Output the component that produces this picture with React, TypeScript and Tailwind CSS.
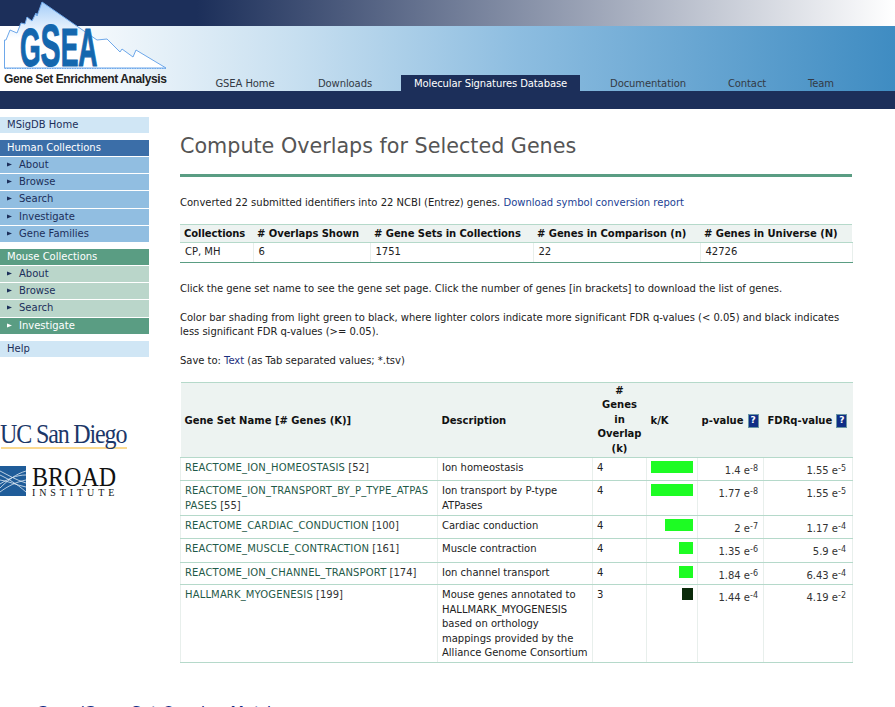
const F = "font-['DejaVu_Sans','Liberation_Sans',sans-serif]";

function Tri({ className }: { className: string }) {
  return (
    <svg width="5" height="5" viewBox="0 0 5 5" className={className}>
      <path d="M0 0.5L5 2.5L0 4.5Z" fill="currentColor" />
    </svg>
  );
}

function SideItem({ label, tone, tall }: { label: string; tone: "blue" | "green" | "active"; tall?: boolean }) {
  const bg = tone === "blue" ? "bg-[#91bee1] text-[#1c2f5a]" : tone === "green" ? "bg-[#bad6ca] text-[#1c2f5a]" : "bg-[#5a9d83] text-white";
  return (
    <div className={`mt-px flex items-center pl-[7px] text-[10px] ${tall ? "h-[17px] pb-[2px]" : "h-4 pb-px"} ${bg}`}>
      <Tri className="mr-[7px] shrink-0" />
      {label}
    </div>
  );
}

function SideHead({ label, className }: { label: string; className: string }) {
  return <div className={`flex h-4 items-center pb-px pl-[7px] ${className}`}>{label}</div>;
}

function Sidebar() {
  return (
    <div className="w-[149px] shrink-0 pt-2 text-[10px]">
      <SideHead label="MSigDB Home" className="bg-[#d0e6f5] text-[#1c2f5a]" />
      <SideHead label="Human Collections" className="mt-[7px] bg-[#3b6ea8] text-white" />
      <SideItem label="About" tone="blue" />
      <SideItem label="Browse" tone="blue" />
      <SideItem label="Search" tone="blue" tall />
      <SideItem label="Investigate" tone="blue" />
      <SideItem label="Gene Families" tone="blue" />
      <SideHead label="Mouse Collections" className="mt-[7px] bg-[#5a9d83] text-white" />
      <SideItem label="About" tone="green" />
      <SideItem label="Browse" tone="green" />
      <SideItem label="Search" tone="green" tall />
      <SideItem label="Investigate" tone="active" />
      <SideHead label="Help" className="mt-[7px] bg-[#d0e6f5] text-[#1c2f5a]" />

      <div className="mt-[65px] origin-left scale-x-[0.89] whitespace-nowrap font-['Liberation_Serif',serif] text-[27px] leading-[25px] tracking-[-1.3px] text-[#1c3768]">UC San Diego</div>
      <div className="ml-px h-[2px] w-[126px] bg-[#fbd98f]" />
      <div className="mt-[17px] flex h-[30px] items-start">
        <svg width="26" height="30" viewBox="0 0 26 30" className="shrink-0">
          <rect width="26" height="30" fill="#1f5c99" />
          <g stroke="#dfeaf4" strokeWidth="0.8" fill="none">
            <path d="M0 22C8 14 16 8 26 5" />
            <path d="M0 18C8 13 16 9 26 9" />
            <path d="M0 9C8 13 16 17 26 26" />
            <path d="M0 14C8 15 16 19 26 21" />
            <path d="M0 26C8 20 16 16 26 14" />
            <path d="M0 5C8 9 16 14 26 17" />
          </g>
        </svg>
        <div className="ml-[6px] font-['Liberation_Serif',serif] text-[#111]">
          <div className="origin-left scale-x-[0.89] whitespace-nowrap text-[27px] leading-[22px]">BROAD</div>
          <div className="whitespace-nowrap pt-px text-[10px] leading-[8px] tracking-[3.9px]">INSTITUTE</div>
        </div>
      </div>
    </div>
  );
}

function Tab({ label, className, active }: { label: string; className: string; active?: boolean }) {
  return (
    <div className={`flex h-4 items-center justify-center text-[10px] tracking-[-0.1px] ${className} ${active ? "bg-[#1c2f5a] text-white" : "text-[#333a45]"}`}>
      {label}
    </div>
  );
}

const LOGO = "M4.5 68L4.5 40L6 40L10 30L17 33L21 23L25 24L27 17L32 21L36 13L37 16L42 2L97 40L107 39L120 52L122 49L133 57L136 50L166 68Z";

function Header() {
  return (
    <div className="relative">
      <div className="h-[26px] bg-[linear-gradient(90deg,#1c2f5a_0%,#1c2f5a_22%,#fff_100%)]" />
      <div className="flex h-[65px] items-end bg-[linear-gradient(90deg,#fff_0%,#fff_5%,#c7dff0_33%,#8dbde0_58%,#3f8cc2_100%)] pl-[197px]">
        <Tab label="GSEA Home" className="w-[96px]" />
        <Tab label="Downloads" className="w-[108px] pr-[4px]" />
        <Tab label="Molecular Signatures Database" className="w-[179px]" active />
        <Tab label="Documentation" className="w-[136px]" />
        <Tab label="Contact" className="w-[62px]" />
        <Tab label="Team" className="w-[86px]" />
      </div>
      <div className="h-[18px] bg-[#1c2f5a]" />
      <svg width="170" height="72" viewBox="0 0 170 72" className="absolute left-0 top-0">
        <defs>
          <linearGradient id="logoFill" x1="0" y1="0" x2="0" y2="1">
            <stop offset="0" stopColor="#a4cdf8" />
            <stop offset="0.55" stopColor="#ffffff" />
            <stop offset="1" stopColor="#ffffff" />
          </linearGradient>
        </defs>
        <path d={LOGO} fill="url(#logoFill)" stroke="#6ea8ea" strokeWidth="1" />
        <path d="M4.5 68.5H166" stroke="#6ea8ea" strokeWidth="1" strokeDasharray="1.5 1" />
      </svg>
      <div className="absolute left-[20px] top-[21px] flex h-[50px] origin-left scale-x-[0.5] items-baseline whitespace-nowrap font-['Liberation_Sans',sans-serif] text-[53px] font-bold leading-[50px] text-[#1467ae] [-webkit-text-stroke:1.2px_#1467ae]">
        <span>G</span>
        <span className="text-[60px]">S</span>
        <span>E</span>
        <span>A</span>
      </div>
      <div className="absolute left-1 top-[72px] whitespace-nowrap font-['Liberation_Sans',sans-serif] text-[12px] font-bold leading-[15px] tracking-[-0.4px] text-[#222]">Gene Set Enrichment Analysis</div>
    </div>
  );
}

const th = "border-b border-[#b5d9ca] bg-[#edf3f1] px-1 text-[10px] font-bold text-[#111] align-middle";
const td = "border-b border-r border-b-[#b5d9ca] border-r-[#e8efec] px-1 pt-[3px] pb-0 align-top text-[10px] leading-[14.5px] text-[#222]";
const para = "text-[10px] leading-[14.5px] tracking-[-0.03px] text-[#222]";

function Exp({ m, e }: { m: string; e: string }) {
  return (
    <span className="text-[#333]">
      {m} e<span className="relative -top-[3px] text-[8px] leading-none">{e}</span>
    </span>
  );
}

function Q() {
  return (
    <span className="ml-1 inline-flex h-[14px] w-[11px] items-center justify-center border border-[#6a97a5] bg-[#0f2d86] align-middle text-[9px] text-white">?</span>
  );
}

const rows = [
  { h: "h-[23px]", name: "REACTOME_ION_HOMEOSTASIS", k: "52", desc: "Ion homeostasis", n: 4, bar: 42, color: "bg-[#1dfc23]", p: ["1.4", "-8"], q: ["1.55", "-5"] },
  { h: "h-[35px]", name: "REACTOME_ION_TRANSPORT_BY_P_TYPE_ATPASPASES", k: "55", desc: "Ion transport by P-type ATPases", n: 4, bar: 42, color: "bg-[#1dfc23]", p: ["1.77", "-8"], q: ["1.55", "-5"] },
  { h: "h-[23px]", name: "REACTOME_CARDIAC_CONDUCTION", k: "100", desc: "Cardiac conduction", n: 4, bar: 28, color: "bg-[#1dfc23]", p: ["2", "-7"], q: ["1.17", "-4"] },
  { h: "h-[24px]", name: "REACTOME_MUSCLE_CONTRACTION", k: "161", desc: "Muscle contraction", n: 4, bar: 14, color: "bg-[#1dfc23]", p: ["1.35", "-6"], q: ["5.9", "-4"] },
  { h: "h-[22px]", name: "REACTOME_ION_CHANNEL_TRANSPORT", k: "174", desc: "Ion channel transport", n: 4, bar: 14, color: "bg-[#1dfc23]", p: ["1.84", "-6"], q: ["6.43", "-4"] },
  { h: "h-[78px]", name: "HALLMARK_MYOGENESIS", k: "199", desc: "Mouse genes annotated to HALLMARK_MYOGENESIS based on orthology mappings provided by the Alliance Genome Consortium", n: 3, bar: 11, color: "bg-[#0a2a0a]", p: ["1.44", "-4"], q: ["4.19", "-2"] },
];

export default function App() {
  return (
    <div className={`h-[707px] w-[895px] overflow-hidden bg-white ${F}`}>
      <Header />
      <div className="flex">
        <Sidebar />
        <div className="ml-[31px] w-[672px] shrink-0">
          <h1 className="mt-[23px] whitespace-nowrap text-[20.7px] font-normal leading-[28px] text-[#555]">Compute Overlaps for Selected Genes</h1>
          <div className="mt-[14px] h-[3px] bg-[#5a9d83]" />
          <p className="mt-[19px] text-[10px] leading-[14.5px] text-[#222]">
            Converted 22 submitted identifiers into 22 NCBI (Entrez) genes. <span className="text-[#1c3f94]">Download symbol conversion report</span>
          </p>
          <table className="mt-[13px] w-full table-fixed border-collapse border-t border-t-[#b5d9ca] text-left">
            <colgroup>
              <col className="w-[73px]" />
              <col className="w-[117px]" />
              <col className="w-[163px]" />
              <col className="w-[167px]" />
              <col className="w-[152px]" />
            </colgroup>
            <tbody>
              <tr className="h-[18px]">
                {["Collections", "# Overlaps Shown", "# Gene Sets in Collections", "# Genes in Comparison (n)", "# Genes in Universe (N)"].map((h) => (
                  <th key={h} className={`${th} whitespace-nowrap tracking-[-0.06px]`}>{h}</th>
                ))}
              </tr>
              <tr className="h-[20px]">
                {["CP, MH", "6", "1751", "22", "42726"].map((c) => (
                  <td key={c} className="border-b border-r border-b-[#5a9d83] border-r-[#e8efec] pl-[5px] pr-1 text-[10px] leading-[14.5px] text-[#222]">{c}</td>
                ))}
              </tr>
            </tbody>
          </table>
          <p className={`mt-[19px] ${para}`}>Click the gene set name to see the gene set page. Click the number of genes [in brackets] to download the list of genes.</p>
          <p className="mt-[15px] text-[10px] leading-[14px] tracking-[-0.02px] text-[#222]">Color bar shading from light green to black, where lighter colors indicate more significant FDR q-values (&lt; 0.05) and black indicates less significant FDR q-values (&gt;= 0.05).</p>
          <p className={`mt-[15px] ${para}`}>Save to: <span className="text-[#1c3080]">Text</span> (as Tab separated values; *.tsv)</p>
          <table className="mt-[13.5px] w-full table-fixed border-collapse border-t border-t-[#b5d9ca] text-left">
            <colgroup>
              <col className="w-[257px]" />
              <col className="w-[155px]" />
              <col className="w-[54px]" />
              <col className="w-[51px]" />
              <col className="w-[66px]" />
              <col className="w-[89px]" />
            </colgroup>
            <tbody>
              <tr className="h-[75px]">
                <th className={th}>Gene Set Name [# Genes (K)]</th>
                <th className={th}>Description</th>
                <th className={`${th} text-center leading-[14.5px]`}># Genes in Overlap (k)</th>
                <th className={th}>k/K</th>
                <th className={`${th} whitespace-nowrap pr-[5px] text-right`}>p-value<Q /></th>
                <th className={`${th} whitespace-nowrap pr-[7px] text-right`}>FDRq-value<Q /></th>
              </tr>
              {rows.map((r, i) => {
                const last = i === rows.length - 1 ? "border-b-[#5a9d83]" : "";
                return (
                  <tr key={r.name} className={r.h}>
                    <td className={`${td} ${last} break-all border-l border-l-[#e8efec]`}>
                      <span className="tracking-[0.15px] text-[#1f5a48]">{r.name}</span> <span className="text-[#333]">[{r.k}]</span>
                    </td>
                    <td className={`${td} ${last}`}>{r.desc}</td>
                    <td className={`${td} ${last}`}>{r.n}</td>
                    <td className={`${td} ${last}`}>
                      <div className="flex justify-end">
                        <div className={`h-3 ${r.color}`} style={{ width: r.bar }} />
                      </div>
                    </td>
                    <td className={`${td} ${last} pt-[5.5px] pr-[5px] text-right`}><Exp m={r.p[0]} e={r.p[1]} /></td>
                    <td className={`${td} ${last} pt-[5.5px] pr-[6px] text-right`}><Exp m={r.q[0]} e={r.q[1]} /></td>
                  </tr>
                );
              })}
            </tbody>
          </table>
        </div>
      </div>
      <div className="mt-[38px] pl-9 text-[16px] leading-6 text-[#0f2d86]">Gene/Gene Set Overlap Matrix</div>
    </div>
  );
}
